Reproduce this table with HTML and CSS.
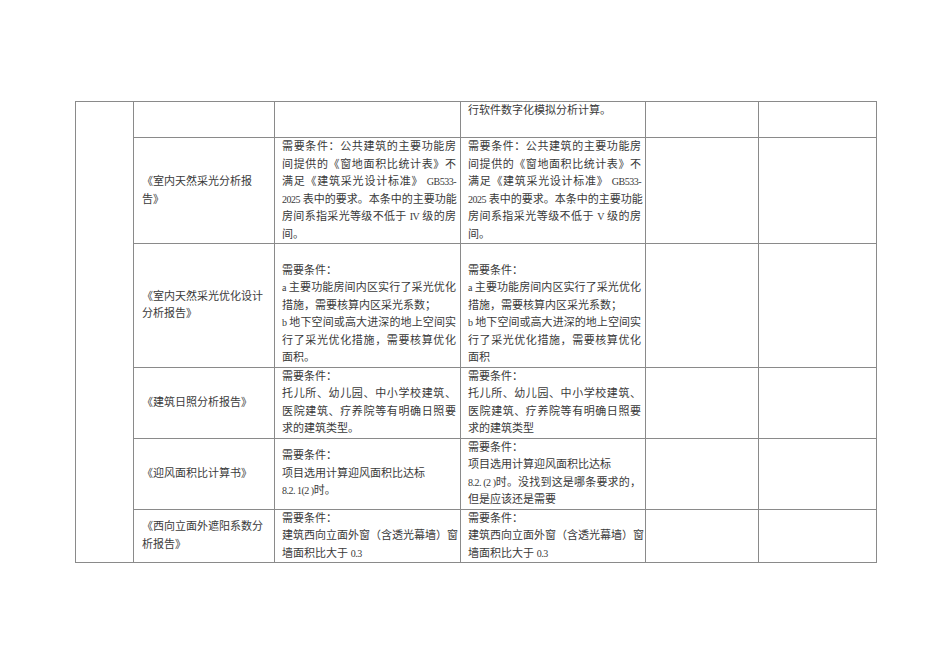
FILE: index.html
```html
<!DOCTYPE html>
<html lang="zh-CN">
<head>
<meta charset="utf-8">
<title>报告需要条件表</title>
<link rel="stylesheet" href="styles.css">
</head>
<body>
<div class="sheet">
<table class="grid">
  <colgroup>
    <col class="c1"><col class="c2"><col class="c3"><col class="c4"><col class="c5"><col class="c6">
  </colgroup>
  <tr>
    <td class="merged" rowspan="6"></td>
    <td class="name"></td>
    <td class="cond"></td>
    <td class="cond top"><span class="l">行软件数字化模拟分析计算。</span><span class="l">&nbsp;</span></td>
    <td></td>
    <td></td>
  </tr>
  <tr>
    <td class="name">《室内天然采光分析报<br>告》</td>
    <td class="cond">
      <span class="j">需要条件：公共建筑的主要功能房</span>
      <span class="j">间提供的《窗地面积比统计表》不</span>
      <span class="j">满足《建筑采光设计标准》 <span class="lat">GB533-</span></span>
      <span class="j"><span class="lat">2025</span> 表中的要求。本条中的主要功能</span>
      <span class="j">房间系指采光等级不低于 <span class="lat">IV</span> 级的房</span>
      <span class="l">间。</span>
    </td>
    <td class="cond">
      <span class="j">需要条件：公共建筑的主要功能房</span>
      <span class="j">间提供的《窗地面积比统计表》不</span>
      <span class="j">满足《建筑采光设计标准》 <span class="lat">GB533-</span></span>
      <span class="j"><span class="lat">2025</span> 表中的要求。本条中的主要功能</span>
      <span class="j">房间系指采光等级不低于 <span class="lat">V</span> 级的房</span>
      <span class="l">间。</span>
    </td>
    <td></td>
    <td></td>
  </tr>
  <tr>
    <td class="name">《室内天然采光优化设计<br>分析报告》</td>
    <td class="cond">
      <span class="l">&nbsp;</span>
      <span class="l">需要条件：</span>
      <span class="j"><span class="lat">a</span> 主要功能房间内区实行了采光优化</span>
      <span class="l">措施，需要核算内区采光系数；</span>
      <span class="j"><span class="lat">b</span> 地下空间或高大进深的地上空间实</span>
      <span class="j">行了采光优化措施，需要核算优化</span>
      <span class="l">面积。</span>
    </td>
    <td class="cond">
      <span class="l">&nbsp;</span>
      <span class="l">需要条件：</span>
      <span class="j"><span class="lat">a</span> 主要功能房间内区实行了采光优化</span>
      <span class="l">措施，需要核算内区采光系数；</span>
      <span class="j"><span class="lat">b</span> 地下空间或高大进深的地上空间实</span>
      <span class="j">行了采光优化措施，需要核算优化</span>
      <span class="l">面积</span>
    </td>
    <td></td>
    <td></td>
  </tr>
  <tr>
    <td class="name">《建筑日照分析报告》</td>
    <td class="cond">
      <span class="l">需要条件：</span>
      <span class="j">托儿所、幼儿园、中小学校建筑、</span>
      <span class="j">医院建筑、疗养院等有明确日照要</span>
      <span class="l">求的建筑类型。</span>
    </td>
    <td class="cond">
      <span class="l">需要条件：</span>
      <span class="j">托儿所、幼儿园、中小学校建筑、</span>
      <span class="j">医院建筑、疗养院等有明确日照要</span>
      <span class="l">求的建筑类型</span>
    </td>
    <td></td>
    <td></td>
  </tr>
  <tr>
    <td class="name">《迎风面积比计算书》</td>
    <td class="cond">
      <span class="l">需要条件：</span>
      <span class="l">项目选用计算迎风面积比达标</span>
      <span class="l"><span class="lat">8.2. 1(2 )</span>时。</span>
    </td>
    <td class="cond">
      <span class="l">需要条件：</span>
      <span class="l">项目选用计算迎风面积比达标</span>
      <span class="j"><span class="lat">8.2. (2 )</span>时。没找到这是哪条要求的，</span>
      <span class="l">但是应该还是需要</span>
    </td>
    <td></td>
    <td></td>
  </tr>
  <tr>
    <td class="name">《西向立面外遮阳系数分<br>析报告》</td>
    <td class="cond">
      <span class="l">需要条件：</span>
      <span class="l">建筑西向立面外窗（含透光幕墙）窗</span>
      <span class="l">墙面积比大于 <span class="lat">0.3</span></span>
    </td>
    <td class="cond">
      <span class="l">需要条件：</span>
      <span class="l">建筑西向立面外窗（含透光幕墙）窗</span>
      <span class="l">墙面积比大于 <span class="lat">0.3</span></span>
    </td>
    <td></td>
    <td></td>
  </tr>
</table>
</div>
</body>
</html>
```

FILE: styles.css
```css
html, body {
  margin: 0;
  padding: 0;
  background: #ffffff;
}

body {
  font-family: "Liberation Serif", "Noto Sans CJK SC", serif;
  font-size: 11px;
  color: #3a3a3a;
}

.sheet {
  padding: 101px 0 0 75px;
}

.grid {
  border-collapse: collapse;
  table-layout: fixed;
  width: 801px;
}

.c1 { width: 58px; }
.c2 { width: 141px; }
.c3 { width: 186px; }
.c4 { width: 185px; }
.c5 { width: 113px; }
.c6 { width: 118px; }

.grid td {
  border: 1px solid #8a8a8a;
  padding: 0 4px 0 7px;
  line-height: 17.5px;
  vertical-align: middle;
}

.grid td.name {
  padding: 0 6px 0 8px;
}

.grid td.top {
  vertical-align: top;
}

.l {
  display: block;
  white-space: nowrap;
}

.j {
  display: block;
  white-space: nowrap;
  text-align: justify;
  text-align-last: justify;
}

.lat {
  font-family: "Liberation Serif", serif;
  font-size: 10px;
  letter-spacing: -0.5px;
}
```
